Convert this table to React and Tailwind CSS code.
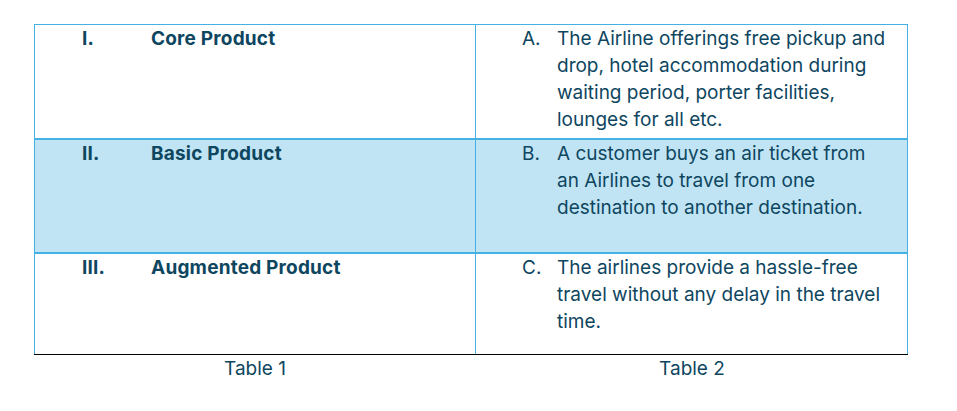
import React from "react";

const rows = [
  {
    num: "I.",
    name: "Core Product",
    letter: "A.",
    lines: [
      "The Airline offerings free pickup and",
      "drop, hotel accommodation during",
      "waiting period, porter facilities,",
      "lounges for all etc.",
    ],
    bg: "bg-white",
    h: "h-[113px]",
  },
  {
    num: "II.",
    name: "Basic Product",
    letter: "B.",
    lines: [
      "A customer buys an air ticket from",
      "an Airlines to travel from one",
      "destination to another destination.",
    ],
    bg: "bg-[#c0e4f4]",
    h: "h-[114px]",
  },
  {
    num: "III.",
    name: "Augmented Product",
    letter: "C.",
    lines: [
      "The airlines provide a hassle-free",
      "travel without any delay in the travel",
      "time.",
    ],
    bg: "bg-white",
    h: "h-[102px]",
  },
];

export default function App() {
  return (
    <div
      className="w-[957px] h-[411px] bg-white text-[#0e4660] pt-[24px] pl-[34px]"
      style={{ fontFamily: "Inter, 'Noto Sans', sans-serif" }}
    >
      <div className="w-[874px] border-t-[1.5px] border-[#45b0e4] border-b-[1.5px] border-b-black">
        {rows.map((row, i) => (
          <div
            key={i}
            className={`grid grid-cols-[442px_432px] ${row.h} ${row.bg} ${
              i > 0 ? "border-t-2 border-[#45b0e4]" : ""
            }`}
          >
            {/* Table 1 cell */}
            <div className="border-l border-r border-[#45b0e4] flex pl-[47px] pt-0 text-[19px] leading-[27px] font-bold tracking-[0.2px]">
              <span className="w-[69px]">{row.num}</span>
              <span>{row.name}</span>
            </div>
            {/* Table 2 cell */}
            <div className="border-r border-[#45b0e4] flex pl-[46px] pt-0 text-[19px] leading-[27px]">
              <span className="w-[35px]">{row.letter}</span>
              <div className="whitespace-nowrap">
                {row.lines.map((l, j) => (
                  <div key={j}>{l}</div>
                ))}
              </div>
            </div>
          </div>
        ))}
      </div>
      <div className="grid grid-cols-[442px_432px] w-[874px] text-[19px] leading-[27px] pt-0">
        <div className="text-center">Table 1</div>
        <div className="text-center">Table 2</div>
      </div>
    </div>
  );
}
